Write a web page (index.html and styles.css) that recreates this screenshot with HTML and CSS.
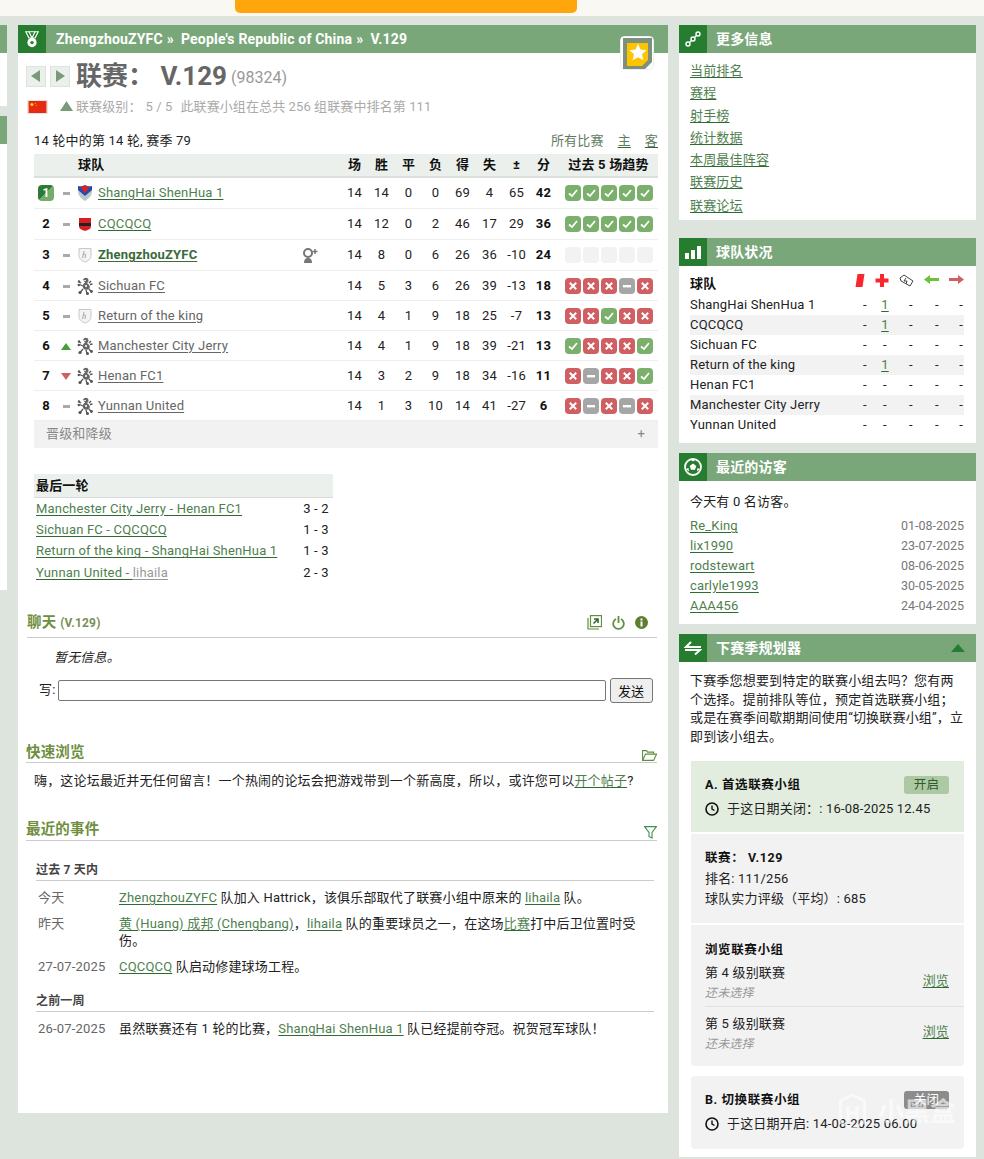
FILE: index.html
```html
<!DOCTYPE html>
<html lang="zh">
<head>
<meta charset="utf-8">
<title>V.129</title>
<link rel="stylesheet" href="styles.css">
</head>
<body>
<svg class="defs" width="0" height="0">
  <symbol id="win" viewBox="0 0 16 16"><rect width="16" height="16" rx="4" fill="#7ab06c"/><path d="M4 8.500l3 2.500 5-6" fill="none" stroke="#fff" stroke-width="1.800"/></symbol>
  <symbol id="loss" viewBox="0 0 16 16"><rect width="16" height="16" rx="4" fill="#cf5f62"/><path d="M4.800 4.800l6.400 6.400M11.200 4.800l-6.400 6.400" fill="none" stroke="#fff" stroke-width="2"/></symbol>
  <symbol id="draw" viewBox="0 0 16 16"><rect width="16" height="16" rx="4" fill="#a6a6a6"/><rect x="4" y="7" width="8" height="2.400" fill="#fff"/></symbol>
  <symbol id="none" viewBox="0 0 16 16"><rect width="16" height="16" rx="4" fill="#f2f2f2"/></symbol>
  <symbol id="lion" viewBox="0 0 16 18"><path d="M6 3c1-3 5-3 5.500 0 .2 1.500-.8 2.500-1.500 3 1 1 2.500 1.500 2.800 3.500.2 1.700-1 3-3 3.300-2 .3-4-1-4-3.300 0-2 1-3.500 2.500-4-.8-.5-1.500-1.200-1.800-2.500z" fill="#666"/><g fill="none" stroke="#555" stroke-width="1.300"><path d="M6 9L2.500 7.500M2 5l2 1M14 4l-2 2M13 7.500l2.500-.5"/><path d="M6 12l-2.500 3M9 13l1 3.500M12 12l2.500 3"/></g><circle cx="3" cy="15.500" r="1.600" fill="#555"/><circle cx="10.500" cy="16.400" r="1.500" fill="#555"/><circle cx="14.500" cy="14.500" r="1.400" fill="#555"/><circle cx="2" cy="4.500" r="1.200" fill="#555"/><circle cx="1.800" cy="8" r="1.200" fill="#555"/><path d="M8 8h2v2H8zM7 3h2v1H7z" fill="#ddd"/></symbol>
  <symbol id="shield" viewBox="0 0 14 16"><path d="M1 1.500h12v7c0 3.500-3 5.500-6 6.500-3-1-6-3-6-6.500z" fill="#f4f4f4" stroke="#c8c8c8"/><path d="M6 4l-1.500 7M5 8c2-1.500 3-1 2.500 0l-.5 3" fill="none" stroke="#aaa"/></symbol>
  <symbol id="clock" viewBox="0 0 14 14"><circle cx="7" cy="7" r="6" fill="none" stroke="#111" stroke-width="1.600"/><path d="M7 3.500V7l2.500 1.500" fill="none" stroke="#111" stroke-width="1.400"/></symbol>
</svg>

<div class="topbar"><div class="orange"></div></div>

<div class="page">
  <aside class="stub">
    <div class="stub-head"></div><div class="stub-box one"></div>
    <div class="stub-head"></div><div class="stub-box two"></div>
  </aside>

  <main class="main">
    <header class="bar">
      <span class="bar-icon"><svg width="16" height="17" viewBox="0 0 20 22"><path d="M2 1h16l-4 8H6z" fill="none" stroke="#fff" stroke-width="1.500"/><path d="M6 1l4 8 4-8" fill="none" stroke="#fff" stroke-width="1.500"/><circle cx="10" cy="15" r="6" fill="#fff"/><circle cx="10" cy="15" r="2.200" fill="#267c2f"/></svg></span>
      <span class="crumbs">ZhengzhouZYFC<i>»</i>People's Republic of China<i>»</i>V.129</span>
      <span class="fav"><svg width="34" height="34" viewBox="0 0 34 34"><rect x=".5" y=".5" width="33" height="33" rx="4" fill="#fff" stroke="#eee"/><path d="M3 2h29v24l-7 7H3z" fill="#7d8f7d"/><path d="M7 7h21v17l-6 6H7z" fill="#fdc400"/><path d="M18 8l2.500 5.600 6 .7-4.500 4 1.300 5.900-5.300-3-5.300 3 1.300-5.900-4.500-4 6-.7z" fill="#fff"/></svg></span>
    </header>

    <div class="title-row">
      <span class="pager"><svg width="10" height="12" viewBox="0 0 10 12"><path d="M9 0v12L0 6z" fill="#7a9a7a"/></svg></span>
      <span class="pager"><svg width="10" height="12" viewBox="0 0 10 12"><path d="M1 0v12l9-6z" fill="#7a9a7a"/></svg></span>
      <h1 class="title">联赛： V.129</h1>
      <span class="title-id">(98324)</span>
    </div>

    <div class="level-row">
      <svg class="flag" width="21" height="14" viewBox="0 0 21 14"><rect width="21" height="14" fill="#e62b12"/><circle cx="4" cy="4" r="1.800" fill="#fd0"/><circle cx="8" cy="2.500" r=".6" fill="#fd0"/><circle cx="9" cy="5" r=".6" fill="#fd0"/></svg>
      <svg class="up" width="13" height="10" viewBox="0 0 13 10"><path d="M6.500 0L13 10H0z" fill="#7a9a7a"/></svg>
      <span class="level-text">联赛级别：<b>5 / 5</b>此联赛小组在总共 256 组联赛中排名第 111</span>
    </div>

    <div class="round-row">
      <span>14 轮中的第 14 轮, 赛季 79</span>
      <span class="filters"><span>所有比赛</span><a href="#">主</a><a href="#">客</a></span>
    </div>

    <table class="league">
      <colgroup><col class="k-rank"><col class="k-chg"><col class="k-crest"><col class="k-name"><col class="k-n"><col class="k-n"><col class="k-n"><col class="k-n"><col class="k-n"><col class="k-n"><col class="k-n"><col class="k-n"><col class="k-trend"></colgroup>
      <thead>
        <tr><th></th><th></th><th class="c-team" colspan="2">球队</th><th>场</th><th>胜</th><th>平</th><th>负</th><th>得</th><th>失</th><th>±</th><th>分</th><th class="th-trend">过去 5 场趋势</th></tr>
      </thead>
      <tbody>
        <tr class="tall"><td class="c-rank"><span class="first">1</span></td><td><span class="same"></span></td><td class="c-crest"><svg width="14" height="16" viewBox="0 0 14 16"><path d="M0 1c3 1 5 0 7-1 2 1 4 2 7 1v5c0 5-4 8-7 10-3-2-7-5-7-10z" fill="#b8c8c8"/><path d="M0 1c3 1 5 0 7-1 2 1 4 2 7 1v4L7 11 0 5z" fill="#2b4aa8"/><path d="M2.500 1.500L7 1l4.500.5L7 8z" fill="#e0201f"/></svg></td><td class="c-name"><a class="green" href="#">ShangHai ShenHua 1</a></td><td>14</td><td>14</td><td>0</td><td>0</td><td>69</td><td>4</td><td>65</td><td class="pts">42</td><td class="c-trend"><svg><use href="#win"/></svg><svg><use href="#win"/></svg><svg><use href="#win"/></svg><svg><use href="#win"/></svg><svg><use href="#win"/></svg></td></tr>
        <tr class="tall"><td class="c-rank">2</td><td><span class="same"></span></td><td class="c-crest"><svg width="14" height="14" viewBox="0 0 14 14"><path d="M1 1h12v8c0 3-3 4-6 5-3-1-6-2-6-5z" fill="#d81e20"/><rect x="1" y="6" width="12" height="3" fill="#222"/></svg></td><td class="c-name"><a class="green" href="#">CQCQCQ</a></td><td>14</td><td>12</td><td>0</td><td>2</td><td>46</td><td>17</td><td>29</td><td class="pts">36</td><td class="c-trend"><svg><use href="#win"/></svg><svg><use href="#win"/></svg><svg><use href="#win"/></svg><svg><use href="#win"/></svg><svg><use href="#win"/></svg></td></tr>
        <tr class="tall"><td class="c-rank">3</td><td><span class="same"></span></td><td class="c-crest"><svg width="14" height="16"><use href="#shield"/></svg></td><td class="c-name me"><a href="#">ZhengzhouZYFC</a><svg class="coach" width="16" height="15" viewBox="0 0 16 15"><circle cx="6" cy="5" r="4" fill="none" stroke="#777" stroke-width="2"/><path d="M2 15c0-4 2-5 4-5s4 1 4 5z" fill="#777"/><path d="M13 1v5M10.500 3.500h5" stroke="#777" stroke-width="1.500"/></svg></td><td>14</td><td>8</td><td>0</td><td>6</td><td>26</td><td>36</td><td>-10</td><td class="pts">24</td><td class="c-trend"><svg><use href="#none"/></svg><svg><use href="#none"/></svg><svg><use href="#none"/></svg><svg><use href="#none"/></svg><svg><use href="#none"/></svg></td></tr>
        <tr><td class="c-rank">4</td><td><span class="same"></span></td><td class="c-crest"><svg width="16" height="18"><use href="#lion"/></svg></td><td class="c-name"><a href="#">Sichuan FC</a></td><td>14</td><td>5</td><td>3</td><td>6</td><td>26</td><td>39</td><td>-13</td><td class="pts">18</td><td class="c-trend"><svg><use href="#loss"/></svg><svg><use href="#loss"/></svg><svg><use href="#loss"/></svg><svg><use href="#draw"/></svg><svg><use href="#loss"/></svg></td></tr>
        <tr><td class="c-rank">5</td><td><span class="same"></span></td><td class="c-crest"><svg width="14" height="16"><use href="#shield"/></svg></td><td class="c-name"><a href="#">Return of the king</a></td><td>14</td><td>4</td><td>1</td><td>9</td><td>18</td><td>25</td><td>-7</td><td class="pts">13</td><td class="c-trend"><svg><use href="#loss"/></svg><svg><use href="#loss"/></svg><svg><use href="#win"/></svg><svg><use href="#loss"/></svg><svg><use href="#loss"/></svg></td></tr>
        <tr><td class="c-rank">6</td><td><span class="tri-up"></span></td><td class="c-crest"><svg width="16" height="18"><use href="#lion"/></svg></td><td class="c-name"><a href="#">Manchester City Jerry</a></td><td>14</td><td>4</td><td>1</td><td>9</td><td>18</td><td>39</td><td>-21</td><td class="pts">13</td><td class="c-trend"><svg><use href="#win"/></svg><svg><use href="#loss"/></svg><svg><use href="#loss"/></svg><svg><use href="#loss"/></svg><svg><use href="#win"/></svg></td></tr>
        <tr><td class="c-rank">7</td><td><span class="tri-down"></span></td><td class="c-crest"><svg width="16" height="18"><use href="#lion"/></svg></td><td class="c-name"><a href="#">Henan FC1</a></td><td>14</td><td>3</td><td>2</td><td>9</td><td>18</td><td>34</td><td>-16</td><td class="pts">11</td><td class="c-trend"><svg><use href="#loss"/></svg><svg><use href="#draw"/></svg><svg><use href="#loss"/></svg><svg><use href="#loss"/></svg><svg><use href="#win"/></svg></td></tr>
        <tr><td class="c-rank">8</td><td><span class="same"></span></td><td class="c-crest"><svg width="16" height="18"><use href="#lion"/></svg></td><td class="c-name"><a href="#">Yunnan United</a></td><td>14</td><td>1</td><td>3</td><td>10</td><td>14</td><td>41</td><td>-27</td><td class="pts">6</td><td class="c-trend"><svg><use href="#loss"/></svg><svg><use href="#draw"/></svg><svg><use href="#loss"/></svg><svg><use href="#draw"/></svg><svg><use href="#loss"/></svg></td></tr>
      </tbody>
    </table>
    <div class="promo"><span>晋级和降级</span><span>+</span></div>

    <table class="last">
      <colgroup><col class="k-match"><col class="k-score"></colgroup>
      <thead><tr><th colspan="2">最后一轮</th></tr></thead>
      <tbody>
        <tr><td><a class="green" href="#">Manchester City Jerry - Henan FC1</a></td><td class="score">3 - 2</td></tr>
        <tr><td><a class="green" href="#">Sichuan FC - CQCQCQ</a></td><td class="score">1 - 3</td></tr>
        <tr><td><a class="green" href="#">Return of the king - ShangHai ShenHua 1</a></td><td class="score">1 - 3</td></tr>
        <tr><td><a class="green" href="#">Yunnan United - </a><a class="pale" href="#">lihaila</a></td><td class="score">2 - 3</td></tr>
      </tbody>
    </table>

    <section class="chat">
      <div class="sec-head"><h2>聊天 <small>(V.129)</small></h2>
        <span class="sec-icons">
          <svg width="15" height="15" viewBox="0 0 15 15"><path d="M1 3v11h11" fill="none" stroke="#5f8f3f" stroke-width="1.200"/><rect x="3.500" y=".6" width="11" height="11" fill="none" stroke="#5f8f3f" stroke-width="1.200"/><path d="M6.500 8.500l4-4M7 4h4v4" fill="none" stroke="#2e6b2e" stroke-width="1.600"/></svg>
          <svg width="13" height="14" viewBox="0 0 13 14"><path d="M4 3a5.300 5.300 0 1 0 5 0M6.500 0v7" fill="none" stroke="#5f8f3f" stroke-width="1.800"/></svg>
          <svg width="13" height="13" viewBox="0 0 13 13"><circle cx="6.500" cy="6.500" r="6.500" fill="#5f7f2f"/><rect x="5.500" y="5.500" width="2" height="5" fill="#fff"/><rect x="5.500" y="2.500" width="2" height="2" fill="#fff"/></svg>
        </span>
      </div>
      <p class="empty">暂无信息。</p>
      <div class="write"><label for="msg">写:</label><input id="msg" type="text"><button type="button">发送</button></div>
    </section>

    <section class="quick">
      <div class="sec-head"><h2>快速浏览</h2><svg width="15" height="11" viewBox="0 0 15 11"><path d="M.6 10.400V.6h4l1 1.500h6v2M.6 10.400h11l3-6.300H3.500z" fill="none" stroke="#5f8f3f" stroke-width="1.100"/></svg></div>
      <p class="quick-text">嗨，这论坛最近并无任何留言！一个热闹的论坛会把游戏带到一个新高度，所以，或许您可以<a class="green" href="#">开个帖子</a>?</p>
    </section>

    <section class="events">
      <div class="sec-head"><h2>最近的事件</h2><svg width="13" height="13" viewBox="0 0 13 13"><path d="M.6.6h11.800L8 6.500V12L5 10.500v-4z" fill="none" stroke="#3f8f4f" stroke-width="1.100"/></svg></div>
      <h3 class="ev-title first-ev">过去 7 天内</h3>
      <div class="ev"><span class="ev-date">今天</span><span class="ev-text"><a class="green" href="#">ZhengzhouZYFC</a> 队加入 Hattrick，该俱乐部取代了联赛小组中原来的 <a class="green" href="#">lihaila</a> 队。</span></div>
      <div class="ev"><span class="ev-date">昨天</span><span class="ev-text"><a class="green" href="#">黄 (Huang) 成邦 (Chengbang)</a>，<a class="green" href="#">lihaila</a> 队的重要球员之一，在这场<a class="green" href="#">比赛</a>打中后卫位置时受伤。</span></div>
      <div class="ev"><span class="ev-date">27-07-2025</span><span class="ev-text"><a class="green" href="#">CQCQCQ</a> 队启动修建球场工程。</span></div>
      <h3 class="ev-title">之前一周</h3>
      <div class="ev"><span class="ev-date">26-07-2025</span><span class="ev-text">虽然联赛还有 1 轮的比赛，<a class="green" href="#">ShangHai ShenHua 1</a> 队已经提前夺冠。祝贺冠军球队！</span></div>
    </section>
  </main>

  <aside class="side">
    <section class="box box-info">
      <header class="box-head"><span class="bar-icon"><svg width="18" height="18" viewBox="0 0 18 18"><g fill="none" stroke="#fff" stroke-width="1.400"><circle cx="4" cy="14" r="2"/><circle cx="9" cy="9" r="2"/><circle cx="14" cy="4" r="2"/></g><path d="M5.500 12.500l2-2M10.500 7.500l2-2" stroke="#fff" stroke-width="1.400"/></svg></span><h2>更多信息</h2></header>
      <ul class="links">
        <li><a class="green" href="#">当前排名</a></li>
        <li><a class="green" href="#">赛程</a></li>
        <li><a class="green" href="#">射手榜</a></li>
        <li><a class="green" href="#">统计数据</a></li>
        <li><a class="green" href="#">本周最佳阵容</a></li>
        <li><a class="green" href="#">联赛历史</a></li>
        <li class="links-last"><a class="green" href="#">联赛论坛</a></li>
      </ul>
    </section>

    <section class="box">
      <header class="box-head"><span class="bar-icon"><svg width="16" height="14" viewBox="0 0 16 14"><path d="M0 8h4v6H0zM6 5h4v9H6zM12 1h4v13h-4z" fill="#fff"/></svg></span><h2>球队状况</h2></header>
      <table class="status">
        <colgroup><col class="s-name"><col class="s-a"><col class="s-a"><col class="s-b"><col class="s-c"><col class="s-d"></colgroup>
        <thead><tr><th class="st-name">球队</th>
          <th><svg width="10" height="13" viewBox="0 0 9 13"><path d="M2 0h7L7 13H0z" fill="#f9262e"/></svg></th>
          <th><svg width="14" height="13" viewBox="0 0 13 13"><path d="M4.500 0h4v4.500H13v4H8.500V13h-4V8.500H0v-4h4.500z" fill="#f9262e"/></svg></th>
          <th><svg width="15" height="13" viewBox="0 0 15 13"><path d="M1 4l4-3 9 6-3 5-9-5z" fill="#fff" stroke="#444"/><path d="M7 4L5 7l3 0-1 3" fill="none" stroke="#444"/></svg></th>
          <th><svg width="15" height="9" viewBox="0 0 15 9"><path d="M0 4.500L6 0v3h9v3H6v3z" fill="#6cc23a"/></svg></th>
          <th><svg width="15" height="9" viewBox="0 0 15 9"><path d="M15 4.500L9 0v3H0v3h9v3z" fill="#cf5f62"/></svg></th></tr></thead>
        <tbody>
          <tr><td class="st-name">ShangHai ShenHua 1</td><td>-</td><td><a class="green" href="#">1</a></td><td>-</td><td>-</td><td>-</td></tr>
          <tr><td class="st-name">CQCQCQ</td><td>-</td><td><a class="green" href="#">1</a></td><td>-</td><td>-</td><td>-</td></tr>
          <tr><td class="st-name">Sichuan FC</td><td>-</td><td>-</td><td>-</td><td>-</td><td>-</td></tr>
          <tr><td class="st-name">Return of the king</td><td>-</td><td><a class="green" href="#">1</a></td><td>-</td><td>-</td><td>-</td></tr>
          <tr><td class="st-name">Henan FC1</td><td>-</td><td>-</td><td>-</td><td>-</td><td>-</td></tr>
          <tr><td class="st-name">Manchester City Jerry</td><td>-</td><td>-</td><td>-</td><td>-</td><td>-</td></tr>
          <tr><td class="st-name">Yunnan United</td><td>-</td><td>-</td><td>-</td><td>-</td><td>-</td></tr>
        </tbody>
      </table>
    </section>

    <section class="box">
      <header class="box-head"><span class="bar-icon"><svg width="18" height="18" viewBox="0 0 18 18"><circle cx="9" cy="9" r="8" fill="none" stroke="#fff" stroke-width="1.800"/><path d="M9 5.500l3.300 2.400-1.300 3.900H7L5.700 7.900z" fill="#fff"/><path d="M6.500 1.500h5L9 3.500zM1.800 11l2.700-1 .5 3.500zM16.200 11l-2.700-1-.5 3.500z" fill="#fff"/></svg></span><h2>最近的访客</h2></header>
      <p class="today">今天有 0 名访客。</p>
      <ul class="visitors">
        <li><a class="green" href="#">Re_King</a><span>01-08-2025</span></li>
        <li><a class="green" href="#">lix1990</a><span>23-07-2025</span></li>
        <li><a class="green" href="#">rodstewart</a><span>08-06-2025</span></li>
        <li><a class="green" href="#">carlyle1993</a><span>30-05-2025</span></li>
        <li><a class="green" href="#">AAA456</a><span>24-04-2025</span></li>
      </ul>
    </section>

    <section class="box planner">
      <header class="box-head"><span class="bar-icon"><svg width="18" height="14" viewBox="0 0 18 14"><path d="M7 1L2 6h15M1 9h15l-5 4.500" fill="none" stroke="#fff" stroke-width="2"/></svg></span><h2>下赛季规划器</h2><span class="collapse"></span></header>
      <p class="intro">下赛季您想要到特定的联赛小组去吗？您有两个选择。提前排队等位，预定首选联赛小组；或是在赛季间歇期期间使用“切换联赛小组”，立即到该小组去。</p>
      <div class="card card-a">
        <div class="card-top"><b>A. 首选联赛小组</b><span class="tag tag-on">开启</span></div>
        <div class="when"><svg width="14" height="14"><use href="#clock"/></svg>于这日期关闭：: 16-08-2025 12.45</div>
      </div>
      <div class="card card-b">
        <b class="cb-title">联赛： V.129</b>
        <div class="cb-lines">排名: 111/256<br>球队实力评级（平均）: 685</div>
      </div>
      <div class="card card-c">
        <b class="cc-title">浏览联赛小组</b>
        <div class="browse"><div>第 4 级别联赛<em>还未选择</em></div><a class="green" href="#">浏览</a></div>
        <div class="browse second"><div>第 5 级别联赛<em>还未选择</em></div><a class="green" href="#">浏览</a></div>
      </div>
      <div class="card card-d">
        <div class="card-top"><b>B. 切换联赛小组</b><span class="tag tag-off">关闭</span></div>
        <div class="when"><svg width="14" height="14"><use href="#clock"/></svg>于这日期开启: 14-08-2025 06.00</div>
      </div>
    </section>
  </aside>
</div>
<div class="watermark"><svg width="29" height="38" viewBox="0 0 29 38"><path d="M14.500 2l12 6v21l-12 7-12-7V8z M10 13v14M19 13v14M10 20h9" fill="none" stroke="#fff" stroke-width="3"/></svg><span>小黑盒</span></div>
</body>
</html>
```

FILE: styles.css
```css
* { box-sizing: border-box; }
html, body { margin: 0; padding: 0; }
body {
  height: 1159px;
  overflow: hidden;
  position: relative;
  background: #dde3dd;
  color: #222;
  font: 13px/18px Roboto, "Noto Sans CJK SC", sans-serif;
  letter-spacing: .18px;
}
.defs { position: absolute; }
a { color: #666; text-decoration: underline; text-underline-offset: 2px; }
a.green { color: #4f7f4f; text-decoration-color: #2e6b2e; }
a.pale { color: #999; }
h1, h2, h3, p, ul { margin: 0; padding: 0; }
ul { list-style: none; }

.topbar { height: 17px; background: #faf8f2; border-bottom: 1px solid #e3e3dc; padding-left: 235px; }
.orange { width: 342px; height: 13px; background: #ffa60c; border-radius: 0 0 5px 5px; }

.page { display: flex; gap: 11px; padding-top: 8px; align-items: flex-start; }

.stub { width: 7px; flex: none; }
.stub-head { height: 28px; background: #7aa77a; }
.stub-box.one { height: 53px; background: #fff; margin-bottom: 10px; }
.stub-box.two { height: 446px; background: #fff; }

.main { width: 650px; height: 1088px; flex: none; background: #fff; }

.bar, .box-head { height: 28px; display: flex; align-items: center; background: #7aa77a; color: #fff; font-weight: 700; font-size: 14px; position: relative; }
.bar-icon { width: 28px; height: 28px; flex: none; display: flex; align-items: center; justify-content: center; background: #267c2f; }
.crumbs { margin-left: 10px; letter-spacing: .18px; }
.crumbs i { font-style: normal; margin: 0 7px 0 4px; }
.fav { position: absolute; left: 602px; top: 11px; width: 34px; height: 34px; }

.title-row { display: flex; align-items: center; height: 30px; margin: 8px 0 0 8px; }
.pager { width: 20px; height: 21px; margin-right: 4px; background: #ecf0ec; border: 1px solid #dde3dd; display: flex; align-items: center; justify-content: center; }
.title { font-size: 26px; line-height: 30px; color: #666; font-weight: 700; margin-left: 2px; letter-spacing: 0; }
.title-id { font-size: 16px; color: #999; margin: 3px 0 0 4px; letter-spacing: 0; }

.level-row { display: flex; align-items: center; height: 18px; margin: 7px 0 0 9px; color: #aaa; }
.flag { border: 1px solid #e4e4e4; }
.up { margin: -2px 0 0 12px; }
.level-text { margin-left: 3px; letter-spacing: .1px; }
.level-text b { font-weight: 400; margin: 0 8px 0 4px; }

.round-row { display: flex; justify-content: space-between; margin: 16px 0 0 16px; width: 624px; height: 18px; }
.filters { color: #5f7a5f; display: flex; gap: 14px; }
.filters a { color: #5f7a5f; text-decoration-color: #2e6b2e; }

.league { border-collapse: separate; border-spacing: 0; table-layout: fixed; width: 624px; margin: 4px 0 0 16px; }
.k-rank { width: 24px; }
.k-chg { width: 16px; }
.k-crest { width: 22px; }
.k-name { width: 245px; }
.k-n { width: 27px; }
.k-trend { width: 101px; }
.league th { height: 24px; background: #ecf0ec; border-bottom: 2px solid #dcdfdc; color: #111; font-weight: 700; text-align: center; padding: 0; }
.league th.c-team { text-align: left; padding-left: 4px; }
.league th.th-trend { padding-left: 2px; }
.league td { height: 30px; padding: 0; text-align: center; border-bottom: 1px solid #eeeeee; }
.league tr.tall td { height: 31px; }
.league td.c-rank { font-weight: 700; color: #111; }
.league td.c-crest { line-height: 0; }
.league td.c-name { text-align: left; padding-left: 2px; }
.league td.pts { font-weight: 700; color: #111; }
.league td.c-trend { text-align: left; padding-left: 8px; line-height: 0; }
.c-trend svg { width: 16px; height: 16px; margin-right: 2px; }
.c-crest svg { vertical-align: middle; }
.me { position: relative; }
.me a { font-weight: 700; color: #3a6b3a; }
.coach { position: absolute; left: 206px; top: 8px; }
.first { display: inline-block; width: 16px; height: 16px; border-radius: 4px; background: linear-gradient(135deg, #2c7a34 50%, #74ad6b 50%); color: #fff; line-height: 16px; font-size: 12px; }
.same { display: inline-block; width: 7px; height: 3px; background: #aaa; vertical-align: middle; }
.tri-up, .tri-down { display: inline-block; vertical-align: middle; border-left: 5.500px solid transparent; border-right: 5.500px solid transparent; }
.tri-up { border-bottom: 7px solid #4b9a3d; }
.tri-down { border-top: 7px solid #cf5f62; }

.promo { width: 624px; height: 27px; margin-left: 16px; background: #f2f2f2; display: flex; align-items: center; justify-content: space-between; padding: 0 13px 2px 12px; color: #888; }

.last { border-collapse: separate; border-spacing: 0; width: 299px; margin: 26px 0 0 16px; table-layout: fixed; }
.k-match { width: 265px; }
.k-score { width: 34px; }
.last th { height: 24px; background: #ecf0ec; border-bottom: 1px solid #d8dcd8; text-align: left; padding: 0 0 0 2px; color: #111; }
.last td { height: 21.330px; padding: 0 0 0 2px; white-space: nowrap; }
.last .score { text-align: center; padding: 0; }

.sec-head { display: flex; align-items: flex-end; justify-content: space-between; border-bottom: 1px solid #ccc; height: 24px; padding-bottom: 4px; }
.sec-head h2 { font-size: 14.500px; font-weight: 700; color: #6f8f3f; line-height: 20px; }
.sec-head h2 small { font-size: 12px; color: #7a9050; }

.chat { margin: 30.700px 11px 0 9px; }
.sec-icons { display: flex; align-items: center; gap: 10px; margin: 0 9px 3px 0; }
.empty { font-style: italic; margin: 11px 0 0 27px; color: #222; }
.write { display: flex; align-items: center; margin: 10px 0 0 12px; height: 26px; }
.write label { margin-right: 2px; }
.write input { width: 548px; height: 21px; border: 1px solid #767676; border-radius: 2px; padding: 0; background: #fff; }
.write button { width: 43px; height: 25px; margin-left: 4px; padding: 0; border: 1px solid #767676; border-radius: 3px; background: #efefef; color: #111; font: 13px Roboto, "Noto Sans CJK SC", sans-serif; }

.quick { margin: 36px 11px 0 8px; }
.quick .sec-head, .events .sec-head { padding-bottom: 1px; }
.quick .sec-head h2 { line-height: 16px; }
.events .sec-head h2 { line-height: 18px; }
.quick-text { margin: 9px 0 0 8px; }

.events { margin: 27px 11px 0 8px; }
.ev-title { font-size: 12px; font-weight: 700; color: #444; line-height: 18px; height: 20px; border-bottom: 1px solid #ccc; margin: 17px 3px 0 10px; }
.ev-title.first-ev { margin-top: 20px; }
.ev { display: flex; margin: 8px 0 9px 12px; line-height: 17px; }
.ev-date { width: 81px; flex: none; color: #666; }
.ev-text { width: 521px; }

.side { width: 297px; flex: none; display: flex; flex-direction: column; gap: 10px; }
.box { background: #fff; }
.box-head h2 { font-size: 14px; font-weight: 700; margin-left: 9px; }
.links { padding: 8px 11px 0; height: 167px; }
.links li { height: 22.280px; line-height: 20px; }
.links li.links-last { margin-top: 1px; }
.box-info { margin-bottom: 8px; }

.status { border-collapse: separate; border-spacing: 0; table-layout: fixed; width: 274px; margin: 6px 0 8px 11px; }
.s-name { width: 165px; }
.s-a { width: 20px; }
.s-b { width: 29px; }
.s-c { width: 26px; }
.s-d { width: 14px; }
.status th { height: 23px; padding: 2px 0 0; text-align: left; font-weight: 700; line-height: 0; vertical-align: top; white-space: nowrap; }
.status th:nth-child(4) { padding-left: 4px; }
.status th:nth-child(5), .status th:nth-child(6) { padding-top: 3px; }
.status th:nth-child(6) svg { margin-left: -1px; }
.status td { height: 20px; padding: 0; text-align: center; color: #222; }
.status td:nth-child(4) { padding-left: 3px; }
.status td:last-child { text-align: right; padding-right: 1px; }
.status .st-name { text-align: left; color: #222; line-height: 18px; }
.status th.st-name { vertical-align: middle; padding: 0; color: #111; }
.status tbody tr:nth-child(even) td { background: #f2f2f2; }

.today { padding: 12px 11px 0; height: 30px; }
.visitors { padding: 5px 12px 8px 11px; }
.visitors li { display: flex; justify-content: space-between; height: 20px; line-height: 20px; }
.visitors span { color: #777; font-size: 12.500px; letter-spacing: 0; }

.collapse { position: absolute; right: 11px; top: 10px; border-left: 7.500px solid transparent; border-right: 7.500px solid transparent; border-bottom: 8px solid #267c2f; }
.intro { padding: 10px 11px 0 11px; line-height: 18.500px; height: 96px; color: #222; }

.card { margin-left: 12px; width: 273px; background: #f2f2f2; padding: 0 15px 0 14px; }
.card + .card { margin-top: 2px; }
.card b { font-weight: 700; font-size: 12.500px; letter-spacing: .6px; color: #111; }
.card-a { background: #e2ecdf; height: 71px; padding-top: 15px; margin-top: 3px; }
.card-top { display: flex; justify-content: space-between; align-items: center; height: 18px; }
.tag { width: 45px; height: 18px; border-radius: 3px; text-align: center; line-height: 18px; font-size: 12.500px; }
.tag-on { background: #acc9a3; color: #2e5a2e; }
.tag-off { background: #8c8c8c; color: #fff; }
.when { display: flex; align-items: center; gap: 8px; margin-top: 6px; height: 18px; }
.card-b { height: 89px; padding-top: 15px; }
.cb-title { display: block; height: 20px; }
.cb-lines { line-height: 20px; }
.card-c { height: 141px; padding: 16px 0 0 14px; border-radius: 0 0 4px 4px; }
.cc-title { display: block; height: 14px; }
.browse { display: flex; justify-content: space-between; align-items: center; height: 51px; padding: 4px 15px 0 0; }
.browse a { margin-bottom: 4px; }
.browse.second { border-top: 1px solid #e2e2e2; height: 50px; }
.browse em { display: block; color: #999; font-size: 12px; line-height: 18px; margin-top: 2px; }
.card.card-d { height: 73px; margin-top: 10px; padding-top: 15px; border-radius: 4px; }
.planner { height: 523px; }

.watermark { position: absolute; left: 838px; top: 1093px; display: flex; align-items: center; gap: 11px; color: #fff; opacity: .6; font-size: 26px; font-weight: 700; line-height: 38px; letter-spacing: 0; }
```
